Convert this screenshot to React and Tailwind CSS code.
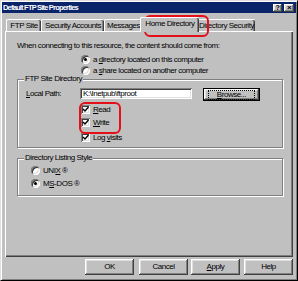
const raised = "bg-[#c0c0c0] shadow-[inset_-1px_-1px_#404040,inset_1px_1px_#fff,inset_-2px_-2px_#808080,inset_2px_2px_#dfdfdf]";
const sunken = "shadow-[inset_1px_1px_#808080,inset_-1px_-1px_#fff,inset_2px_2px_#404040,inset_-2px_-2px_#dfdfdf]";

function Radio({ on }) {
  return (
    <span className={`relative inline-flex items-center justify-center w-[9px] h-[9px] rounded-full bg-white shrink-0 ${sunken}`}>
      {on && <span className="w-[3px] h-[3px] rounded-full bg-black" />}
    </span>
  );
}

function Check() {
  return (
    <span className={`inline-flex items-center justify-center w-[9px] h-[9px] bg-white shrink-0 ${sunken}`}>
      <svg width="7" height="7" viewBox="0 0 7 7">
        <path d="M1 3 L3 5 L6.5 1" fill="none" stroke="#000" strokeWidth="1.4" />
      </svg>
    </span>
  );
}

function Tab({ children, w, sel }) {
  return (
    <div
      className={`flex items-center justify-center whitespace-nowrap bg-[#c0c0c0] border-t border-l border-white rounded-tl-[2px] rounded-tr-[2px] shadow-[inset_-1px_0_#404040,inset_-2px_0_#808080] ${
        sel ? "h-[15px] -mb-[1px] z-10 -mx-[2px] pb-[2px]" : "h-[12px]"
      }`}
      style={{ width: w }}
    >
      {children}
    </div>
  );
}

function Btn({ children, cls = "" }) {
  return (
    <div className={`w-[49px] h-[16px] flex items-center justify-center ${raised} ${cls}`}>{children}</div>
  );
}

export default function App() {
  return (
    <div className="w-[298px] h-[281px] bg-[#c0c0c0] relative overflow-hidden text-black text-[8px] leading-[10px] tracking-[-0.45px] font-['Liberation_Sans',Arial,sans-serif] border border-t-[#dfdfdf] border-l-[#dfdfdf] border-r-black border-b-black shadow-[inset_1px_1px_#fff,inset_-1px_-1px_#808080]">
      <div className="flex flex-col pl-[1px] pr-[1px] pt-[1px]">
        {/* title bar */}
        <div className="h-[11px] bg-[#0a246a] flex items-center pl-[1px] pr-[2px]">
          <span className="text-white font-bold text-[7.5px] tracking-[-0.8px]">Default FTP Site Properties</span>
          <div className="ml-auto flex gap-[2px]">
            <div className={`w-[9px] h-[8px] flex items-center justify-center text-[7px] font-bold leading-none ${raised}`}>?</div>
            <div className={`w-[10px] h-[8px] flex items-center justify-center text-[8px] font-bold leading-none ${raised}`}>×</div>
          </div>
        </div>

        <div className="flex flex-col pl-[3px] pr-[3px]">
          {/* tabs */}
          <div className="h-[18px] flex items-end pl-[1px]">
            <Tab w={35}>FTP Site</Tab>
            <Tab w={63}>Security Accounts</Tab>
            <Tab w={38}>Messages</Tab>
            <Tab w={59} sel>Home Directory</Tab>
            <Tab w={58}>Directory Security</Tab>
          </div>

          {/* panel */}
          <div className="h-[226px] border-t border-l border-white shadow-[inset_-1px_-1px_#404040,inset_-2px_-2px_#808080] flex flex-col">
            <div className="h-[10px] mt-[9px] ml-[11px] whitespace-nowrap">
              When connecting to this resource, the content should come from:
            </div>
            <div className="h-[11px] mt-[3px] ml-[75px] flex items-center gap-[3px] whitespace-nowrap">
              <Radio on />
              <span>a <u>d</u>irectory located on this computer</span>
            </div>
            <div className="h-[11px] ml-[75px] flex items-center gap-[3px] whitespace-nowrap">
              <Radio />
              <span>a <u>s</u>hare located on another computer</span>
            </div>

            {/* FTP Site Directory group */}
            <div className="relative h-[69px] mt-[3px] ml-[11px] mr-[10px] border border-[#808080] shadow-[inset_1px_1px_#fff,1px_1px_#fff] flex flex-col">
              <span className="absolute -top-[6px] left-[6px] px-[1px] bg-[#c0c0c0]">FTP Site Directory</span>
              <div className="h-[13px] mt-[8px] flex items-start">
                <span className="w-[62px] pl-[8px] mt-[1px]"><u>L</u>ocal Path:</span>
                <div className={`w-[112px] h-[11px] bg-white flex items-center pl-[3px] ${sunken}`}>K:\Inetpub\ftproot</div>
                <div className="ml-[11px] w-[57px] h-[13px] border border-black">
                  <div className={`w-full h-full flex items-center justify-center ${raised}`}>
                    <span className="outline outline-1 outline-dotted outline-black px-[8px] leading-[8px]"><u>B</u>rowse...</span>
                  </div>
                </div>
              </div>
              <div className="h-[13px] mt-[2px] ml-[63px] flex items-center gap-[3px]">
                <Check />
                <span><u>R</u>ead</span>
              </div>
              <div className="h-[13px] ml-[63px] flex items-center gap-[3px]">
                <Check />
                <span><u>W</u>rite</span>
              </div>
              <div className="h-[13px] mt-[2px] ml-[63px] flex items-center gap-[3px]">
                <Check />
                <span>Log <u>v</u>isits</span>
              </div>
            </div>

            {/* Directory Listing Style group */}
            <div className="relative h-[38px] mt-[10px] ml-[11px] mr-[10px] border border-[#808080] shadow-[inset_1px_1px_#fff,1px_1px_#fff] flex flex-col">
              <span className="absolute -top-[6px] left-[6px] px-[1px] bg-[#c0c0c0]">Directory Listing Style</span>
              <div className="h-[13px] mt-[5px] ml-[13px] flex items-center gap-[3px]">
                <Radio />
                <span>UNI<u>X</u> ®</span>
              </div>
              <div className="h-[13px] ml-[13px] flex items-center gap-[3px]">
                <Radio on />
                <span>M<u>S</u>-DOS ®</span>
              </div>
            </div>
          </div>

          {/* buttons */}
          <div className="h-[16px] mt-[2px] flex justify-end">
            <Btn>OK</Btn>
            <Btn cls="ml-[5px]">Cancel</Btn>
            <Btn cls="ml-[3px]"><span><u>A</u>pply</span></Btn>
            <Btn cls="ml-[4px]">Help</Btn>
          </div>
        </div>
      </div>

      {/* red annotation overlays */}
      <div className="absolute left-[143px] top-[14px] w-[65px] h-[22px] border-2 border-[#e3101a] rounded-[6px] pointer-events-none" />
      <div className="absolute left-[78px] top-[101px] w-[42px] h-[32px] border-2 border-[#e3101a] rounded-[6px] pointer-events-none" />
    </div>
  );
}
